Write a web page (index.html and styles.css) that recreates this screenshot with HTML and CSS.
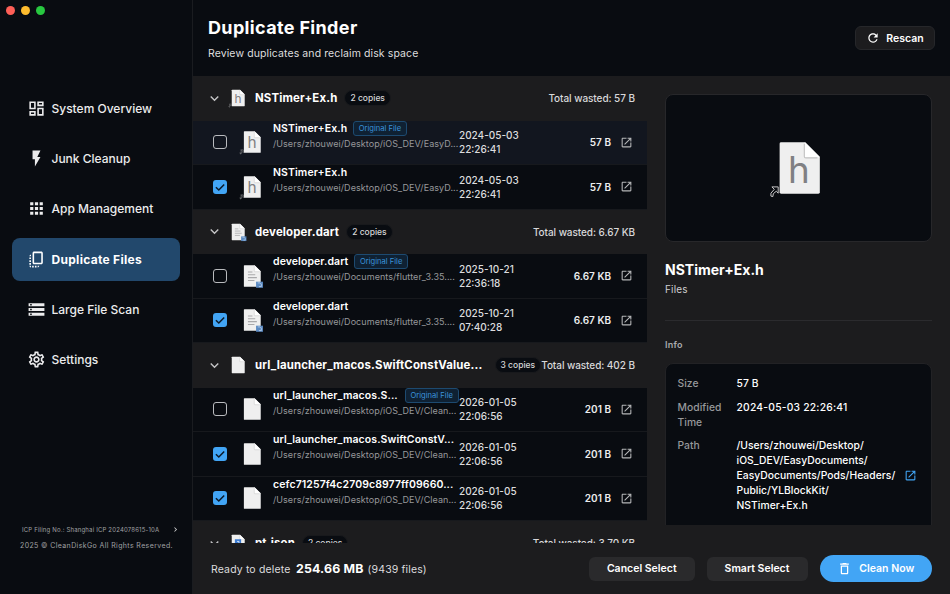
FILE: index.html
```
<!DOCTYPE html>
<html lang="en">
<head>
  <meta charset="UTF-8">
  <meta name="viewport" content="width=device-width, initial-scale=1.0">
  <title>CleanDiskGo</title>
  <link rel="stylesheet" href="styles.css">
</head>
<body>
  <svg class="sprite">
    <symbol id="dashboard" viewBox="0 0 24 24"><path d="M19 5v2h-4V5h4M9 5v6H5V5h4m10 8v6h-4v-6h4M9 17v2H5v-2h4M21 3h-8v6h8V3zM11 3H3v10h8V3zm10 8h-8v10h8V11zm-10 4H3v6h8v-6z"/></symbol>
    <symbol id="bolt" viewBox="0 0 24 24"><path d="M7 2v11h3v9l7-12h-4l4-8z"/></symbol>
    <symbol id="apps" viewBox="0 0 24 24"><path d="M4 8h4V4H4v4zm6 12h4v-4h-4v4zm-6 0h4v-4H4v4zm0-6h4v-4H4v4zm6 0h4v-4h-4v4zm6-10v4h4V4h-4zm-6 4h4V4h-4v4zm6 6h4v-4h-4v4zm0 6h4v-4h-4v4z"/></symbol>
    <symbol id="copy" viewBox="0 0 24 24"><path d="M18,2H9C7.9,2,7,2.9,7,4v12c0,1.1,0.9,2,2,2h9c1.1,0,2-0.9,2-2V4C20,2.9,19.1,2,18,2z M18,16H9V4h9V16z M3,15v-2h2v2H3z M3,9.5h2v2H3V9.5z M10,20h2v2h-2V20z M3,18.5v-2h2v2H3z M5,22c-1.1,0-2-0.9-2-2h2V22z M8.5,22h-2v-2h2V22z M13.5,22L13.5,22l0-2h2v0C15.5,21.1,14.6,22,13.5,22z M5,6L5,6l0,2H3v0C3,6.9,3.9,6,5,6z"/></symbol>
    <symbol id="storage" viewBox="0 0 24 24"><path d="M2 20h20v-4H2v4zm2-3h2v2H4v-2zM2 4v4h20V4H2zm4 3H4V5h2v2zm-4 7h20v-4H2v4zm2-3h2v2H4v-2z"/></symbol>
    <symbol id="settings" viewBox="0 0 24 24"><path d="M19.43 12.98c.04-.32.07-.64.07-.98s-.03-.66-.07-.98l2.11-1.65c.19-.15.24-.42.12-.64l-2-3.46c-.09-.16-.26-.25-.44-.25-.06 0-.12.01-.17.03l-2.49 1c-.52-.4-1.08-.73-1.69-.98l-.38-2.65C14.46 2.18 14.25 2 14 2h-4c-.25 0-.46.18-.49.42l-.38 2.65c-.61.25-1.17.59-1.69.98l-2.49-1c-.06-.02-.12-.03-.18-.03-.17 0-.34.09-.43.25l-2 3.46c-.13.22-.07.49.12.64l2.11 1.65c-.04.32-.07.65-.07.98s.03.66.07.98l-2.11 1.65c-.19.15-.24.42-.12.64l2 3.46c.09.16.26.25.44.25.06 0 .12-.01.17-.03l2.49-1c.52.4 1.08.73 1.69.98l.38 2.65c.03.24.24.42.49.42h4c.25 0 .46-.18.49-.42l.38-2.65c.61-.25 1.17-.59 1.69-.98l2.49 1c.06.02.12.03.18.03.17 0 .34-.09.43-.25l2-3.46c.12-.22.07-.49-.12-.64l-2.11-1.65zm-1.98-1.71c.04.31.05.52.05.73 0 .21-.02.43-.05.73l-.14 1.13.89.7 1.08.84-.7 1.21-1.27-.51-1.04-.42-.9.68c-.43.32-.84.56-1.25.73l-1.06.43-.16 1.13-.2 1.35h-1.4l-.19-1.35-.16-1.13-1.06-.43c-.43-.18-.83-.41-1.23-.71l-.91-.7-1.06.43-1.27.51-.7-1.21 1.08-.84.89-.7-.14-1.13c-.03-.31-.05-.54-.05-.74s.02-.43.05-.73l.14-1.13-.89-.7-1.08-.84.7-1.21 1.27.51 1.04.42.9-.68c.43-.32.84-.56 1.25-.73l1.06-.43.16-1.13.2-1.35h1.39l.19 1.35.16 1.13 1.06.43c.43.18.83.41 1.23.71l.91.7 1.06-.43 1.27-.51.7 1.21-1.07.85-.89.7.14 1.13zM12 8c-2.21 0-4 1.79-4 4s1.79 4 4 4 4-1.79 4-4-1.79-4-4-4zm0 6c-1.1 0-2-.9-2-2s.9-2 2-2 2 .9 2 2-.9 2-2 2z"/></symbol>
    <symbol id="refresh" viewBox="0 0 24 24"><path d="M17.65 6.35C16.2 4.9 14.21 4 12 4c-4.42 0-7.99 3.58-7.99 8s3.57 8 7.99 8c3.73 0 6.84-2.55 7.73-6h-2.08c-.82 2.33-3.04 4-5.65 4-3.31 0-6-2.69-6-6s2.69-6 6-6c1.66 0 3.14.69 4.22 1.78L13 11h7V4l-2.35 2.35z"/></symbol>
    <symbol id="trash" viewBox="0 0 24 24"><path d="M16 9v10H8V9h8m-1.5-6h-5l-1 1H5v2h14V4h-3.5l-1-1zM18 7H6v12c0 1.1.9 2 2 2h8c1.1 0 2-.9 2-2V7z"/></symbol>
    <symbol id="down" viewBox="0 0 24 24"><path d="M16.59 8.59L12 13.17 7.41 8.59 6 10l6 6 6-6z"/></symbol>
    <symbol id="right" viewBox="0 0 24 24"><path d="M10 6L8.59 7.41 13.17 12l-4.58 4.59L10 18l6-6z"/></symbol>
    <symbol id="open" viewBox="0 0 24 24"><path d="M19 19H5V5h7V3H5c-1.11 0-2 .9-2 2v14c0 1.1.89 2 2 2h14c1.1 0 2-.9 2-2v-7h-2v7zM14 3v2h3.59l-9.83 9.83 1.41 1.41L19 6.41V10h2V3h-7z"/></symbol>
    <symbol id="check" viewBox="0 0 14 14"><path d="M2.9 7.2l2.9 2.8 5.4-5.6" fill="none" stroke="#0b1a29" stroke-width="1.5"/></symbol>
    <symbol id="page" viewBox="0 0 64 64">
      <path d="M13.500 5.500H38.500L53.500 20.500V57a1.500 1.500 0 0 1-1.500 1.500H13.500a1.500 1.500 0 0 1-1.500-1.500V7a1.500 1.500 0 0 1 1.500-1.500z" fill="#efefef"/>
      <path d="M38 5.500L53.500 21H39.500a1.500 1.500 0 0 1-1.500-1.500z" fill="#fff"/>
      <path d="M37.500 7V20a1.500 1.500 0 0 0 1.500 1.500H51" fill="none" stroke="#c4c4c4" stroke-width="1.200"/>
    </symbol>
    <symbol id="header-file" viewBox="0 0 64 64">
      <use href="#page"/>
      <text x="32" y="47.500" text-anchor="middle" font-family="Inter" font-size="38" fill="#808083">h</text>
      <path d="M4 51.500h6.500v6.500l-2-2-3 2.500-.5 3-2-.5v-3l3.500-4z" fill="#090c11" stroke="#ccc" stroke-width="1"/>
    </symbol>
    <symbol id="dart-file" viewBox="0 0 64 64">
      <use href="#page"/>
      <path d="M22 22h11M22 29h18M22 36h22M22 43h16" stroke="#a9a9ab" stroke-width="2.500"/>
      <path d="M42 46h17v15H42z" fill="#5b8ac2"/>
      <path d="M46 49h6l3 3v6h-6" fill="none" stroke="#bcd3ee" stroke-width="2"/>
    </symbol>
    <symbol id="json-file" viewBox="0 0 64 64">
      <use href="#page"/>
      <path d="M22 20h20v24H22z" fill="#3d7bd0"/>
      <path d="M29 27h6v10" fill="none" stroke="#d5e5fa" stroke-width="3"/>
    </symbol>
  </svg>

  <div class="window">
    <aside class="sidebar">
      <div class="lights"><i class="red"></i><i class="yellow"></i><i class="green"></i></div>
      <nav>
        <a class="nav-item"><svg><use href="#dashboard"/></svg>System Overview</a>
        <a class="nav-item"><svg><use href="#bolt"/></svg>Junk Cleanup</a>
        <a class="nav-item"><svg><use href="#apps"/></svg>App Management</a>
        <a class="nav-item active"><svg><use href="#copy"/></svg>Duplicate Files</a>
        <a class="nav-item"><svg><use href="#storage"/></svg>Large File Scan</a>
        <a class="nav-item"><svg><use href="#settings"/></svg>Settings</a>
      </nav>
      <div class="legal">
        <p class="icp"><span>ICP Filing No.: Shanghai ICP 2024078615-10A</span><svg><use href="#right"/></svg></p>
        <p class="copyright">2025 © CleanDiskGo All Rights Reserved.</p>
      </div>
    </aside>

    <main>
      <header class="top">
        <div>
          <h1>Duplicate Finder</h1>
          <p class="subtitle">Review duplicates and reclaim disk space</p>
        </div>
        <button class="rescan-btn"><svg><use href="#refresh"/></svg>Rescan</button>
      </header>

      <div class="content">
        <section class="list">
          <div class="group">
            <svg class="arrow"><use href="#down"/></svg>
            <svg class="group-icon"><use href="#header-file"/></svg>
            <b class="group-name">NSTimer+Ex.h</b><span class="copies">2 copies</span>
            <span class="wasted">Total wasted: 57 B</span>
          </div>
          <div class="row selected">
            <span class="checkbox"></span>
            <svg class="file-icon"><use href="#header-file"/></svg>
            <div class="info">
              <div class="name"><b>NSTimer+Ex.h</b><span class="tag">Original File</span></div>
              <div class="path">/Users/zhouwei/Desktop/iOS_DEV/EasyD...</div>
            </div>
            <div class="date">2024-05-03 22:26:41</div>
            <div class="size">57 B</div>
            <svg class="open"><use href="#open"/></svg>
          </div>
          <div class="row">
            <span class="checkbox checked"><svg><use href="#check"/></svg></span>
            <svg class="file-icon"><use href="#header-file"/></svg>
            <div class="info">
              <div class="name"><b>NSTimer+Ex.h</b></div>
              <div class="path">/Users/zhouwei/Desktop/iOS_DEV/EasyD...</div>
            </div>
            <div class="date">2024-05-03 22:26:41</div>
            <div class="size">57 B</div>
            <svg class="open"><use href="#open"/></svg>
          </div>

          <div class="group">
            <svg class="arrow"><use href="#down"/></svg>
            <svg class="group-icon"><use href="#dart-file"/></svg>
            <b class="group-name">developer.dart</b><span class="copies">2 copies</span>
            <span class="wasted">Total wasted: 6.67 KB</span>
          </div>
          <div class="row">
            <span class="checkbox"></span>
            <svg class="file-icon"><use href="#dart-file"/></svg>
            <div class="info">
              <div class="name"><b>developer.dart</b><span class="tag">Original File</span></div>
              <div class="path">/Users/zhouwei/Documents/flutter_3.35....</div>
            </div>
            <div class="date">2025-10-21 22:36:18</div>
            <div class="size">6.67 KB</div>
            <svg class="open"><use href="#open"/></svg>
          </div>
          <div class="row">
            <span class="checkbox checked"><svg><use href="#check"/></svg></span>
            <svg class="file-icon"><use href="#dart-file"/></svg>
            <div class="info">
              <div class="name"><b>developer.dart</b></div>
              <div class="path">/Users/zhouwei/Documents/flutter_3.35....</div>
            </div>
            <div class="date">2025-10-21 07:40:28</div>
            <div class="size">6.67 KB</div>
            <svg class="open"><use href="#open"/></svg>
          </div>

          <div class="group">
            <svg class="arrow"><use href="#down"/></svg>
            <svg class="group-icon"><use href="#page"/></svg>
            <b class="group-name long">url_launcher_macos.SwiftConstValue...</b><span class="copies">3 copies</span>
            <span class="wasted">Total wasted: 402 B</span>
          </div>
          <div class="row">
            <span class="checkbox"></span>
            <svg class="file-icon"><use href="#page"/></svg>
            <div class="info">
              <div class="name"><b class="cut">url_launcher_macos.S...</b><span class="tag">Original File</span></div>
              <div class="path">/Users/zhouwei/Desktop/iOS_DEV/Clean...</div>
            </div>
            <div class="date">2026-01-05 22:06:56</div>
            <div class="size">201 B</div>
            <svg class="open"><use href="#open"/></svg>
          </div>
          <div class="row">
            <span class="checkbox checked"><svg><use href="#check"/></svg></span>
            <svg class="file-icon"><use href="#page"/></svg>
            <div class="info">
              <div class="name"><b>url_launcher_macos.SwiftConstV...</b></div>
              <div class="path">/Users/zhouwei/Desktop/iOS_DEV/Clean...</div>
            </div>
            <div class="date">2026-01-05 22:06:56</div>
            <div class="size">201 B</div>
            <svg class="open"><use href="#open"/></svg>
          </div>
          <div class="row">
            <span class="checkbox checked"><svg><use href="#check"/></svg></span>
            <svg class="file-icon"><use href="#page"/></svg>
            <div class="info">
              <div class="name"><b>cefc71257f4c2709c8977ff09660...</b></div>
              <div class="path">/Users/zhouwei/Desktop/iOS_DEV/Clean...</div>
            </div>
            <div class="date">2026-01-05 22:06:56</div>
            <div class="size">201 B</div>
            <svg class="open"><use href="#open"/></svg>
          </div>

          <div class="group">
            <svg class="arrow"><use href="#down"/></svg>
            <svg class="group-icon"><use href="#json-file"/></svg>
            <b class="group-name">pt.json</b><span class="copies">2 copies</span>
            <span class="wasted">Total wasted: 3.70 KB</span>
          </div>
        </section>

        <section class="detail">
          <div class="preview"><svg><use href="#header-file"/></svg></div>
          <h2>NSTimer+Ex.h</h2>
          <p class="kind">Files</p>
          <hr>
          <h3>Info</h3>
          <div class="card">
            <span class="label">Size</span>
            <span>57 B</span>
            <span class="label">Modified<br>Time</span>
            <span class="modified">2024-05-03 22:26:41</span>
            <span class="label">Path</span>
            <div class="full-path">
              <span>/Users/zhouwei/Desktop/<br>iOS_DEV/EasyDocuments/<br>EasyDocuments/Pods/Headers/<br>Public/YLBlockKit/<br>NSTimer+Ex.h</span>
              <svg><use href="#open"/></svg>
            </div>
          </div>
        </section>
      </div>

      <footer class="bottom">
        <p>Ready to delete <b>254.66 MB</b> (9439 files)</p>
        <button class="btn cancel">Cancel Select</button>
        <button class="btn smart">Smart Select</button>
        <button class="clean-btn"><svg><use href="#trash"/></svg>Clean Now</button>
      </footer>
    </main>
  </div>
</body>
</html>
```
FILE: styles.css
```
*{
  box-sizing: border-box;
}
body{
  margin: 0;
  background-color: #090c11;
  color: white;
  font-family: Inter, "Liberation Sans", sans-serif;
  font-size: 10.5px;
}
h1, h2, h3, p{
  margin: 0;
}
svg{
  fill: currentColor;
  flex: none;
  display: block;
}
button{
  border: none;
  color: white;
  font-family: inherit;
  font-weight: 600;
  cursor: pointer;
  padding: 0;
  display: flex;
  align-items: center;
  justify-content: center;
}
.sprite{
  display: none;
}
.window{
  display: flex;
  width: 950px;
  height: 594px;
  overflow: hidden;
}

/* sidebar */
.sidebar{
  width: 193px;
  flex: none;
  border-right: 1px solid #1a1c20;
  display: flex;
  flex-direction: column;
}
.lights{
  display: flex;
  gap: 6px;
  padding: 6px 0 0 6px;
}
.lights i{
  width: 9px;
  height: 9px;
  border-radius: 50%;
}
.red{ background-color: #fe5f57; }
.yellow{ background-color: #febc2e; }
.green{ background-color: #28c840; }
nav{
  padding: 71.5px 12px 0;
  display: flex;
  flex-direction: column;
  gap: 7.4px;
}
.nav-item{
  display: flex;
  align-items: center;
  gap: 5.5px;
  height: 43px;
  padding-left: 15px;
  border-radius: 8px;
  font-size: 12px;
  font-weight: 500;
  color: #ececed;
}
.nav-item svg{
  width: 19px;
  height: 19px;
}
.nav-item.active{
  background-color: #22486c;
  color: white;
  font-weight: 700;
  letter-spacing: 0.3px;
}
.legal{
  margin-top: auto;
  padding: 0 0 42px 20px;
  color: #a0a1a4;
}
.icp{
  display: flex;
  align-items: center;
  font-size: 6px;
  padding-left: 2px;
  letter-spacing: 0.18px;
}
.icp svg{
  width: 9px;
  height: 9px;
  margin-left: 12px;
  color: #ddd;
}
.copyright{
  font-size: 7px;
  line-height: 12px;
  margin-top: 6px;
  letter-spacing: 0.38px;
}

/* header */
main{
  flex: 1;
  display: flex;
  flex-direction: column;
}
.top{
  height: 76px;
  flex: none;
  display: flex;
  align-items: center;
  justify-content: space-between;
  padding: 0 15px;
}
.top h1{
  font-size: 18px;
  line-height: 24px;
  margin-top: 2px;
  letter-spacing: 0.35px;
}
.subtitle{
  font-size: 10.5px;
  line-height: 16px;
  margin-top: 6px;
  letter-spacing: 0.1px;
  color: #dededf;
}
.rescan-btn{
  width: 80px;
  height: 24px;
  gap: 6px;
  border-radius: 6px;
  background-color: #1c1c1e;
  border: 1px solid #26272a;
  font-size: 10.5px;
}
.rescan-btn svg{
  width: 14px;
  height: 14px;
}

/* duplicate list */
.content{
  height: 467px;
  flex: none;
  display: flex;
  background-color: #1c1c1e;
  overflow: hidden;
}
.list{
  width: 454px;
  flex: none;
}
.group{
  height: 44.5px;
  display: flex;
  align-items: center;
  padding: 0 12px 0 12.5px;
}
.arrow{
  width: 17px;
  height: 17px;
  color: #c4c4c6;
}
.group-icon{
  width: 20px;
  height: 20px;
  margin: 0 7.5px 0 5px;
}
.group-name{
  font-size: 11.4px;
  letter-spacing: 0.17px;
}
.group-name.long{
  width: 232.5px;
  flex: none;
}
.copies{
  height: 16px;
  line-height: 15px;
  margin-left: 7px;
  padding: 0 5px;
  border-radius: 8px;
  border: 1px solid #18191c;
  background-color: #090c11;
  font-size: 8.5px;
  font-weight: 500;
  color: #d5d5d6;
  white-space: nowrap;
}
.wasted{
  margin-left: auto;
  font-weight: 500;
  font-size: 10px;
  letter-spacing: -0.06px;
  color: #d8d8da;
  white-space: nowrap;
}
.row{
  height: 44.5px;
  display: flex;
  align-items: center;
  padding: 0 14.5px 0 20px;
  background-color: #090c11;
  border-bottom: 1px solid #17191d;
}
.row.selected{
  background-color: #12161f;
}
.checkbox{
  width: 14px;
  height: 14px;
  flex: none;
  border: 1.5px solid #b9bbbe;
  border-radius: 3px;
}
.checkbox.checked{
  background-color: #42a5f5;
  border: none;
}
.checkbox svg{
  width: 14px;
  height: 14px;
}
.file-icon{
  width: 26px;
  height: 26px;
  margin: 0 8px 0 12px;
}
.info{
  width: 186px;
  flex: none;
  align-self: flex-start;
}
.name{
  display: flex;
  align-items: center;
  height: 15px;
  font-size: 10.5px;
  letter-spacing: 0.09px;
  white-space: nowrap;
}
.name b{
  font-weight: 600;
  flex: none;
}
.name .cut{
  width: 126px;
}
.tag{
  margin-left: 5.5px;
  height: 15px;
  line-height: 13px;
  padding: 0 5px;
  border: 1px solid #1d4a70;
  border-radius: 3px;
  background-color: #0f2133;
  color: #3b93da;
  font-size: 7.6px;
  letter-spacing: 0;
}
.path{
  font-size: 9px;
  line-height: 15px;
  letter-spacing: 0.06px;
  color: #97989b;
  white-space: nowrap;
}
.date{
  width: 65px;
  line-height: 14px;
  font-size: 10px;
  font-weight: 500;
  color: #dcdcde;
}
.size{
  margin-left: auto;
  font-size: 10px;
  font-weight: 600;
  color: #ececed;
}
.open{
  width: 13px;
  height: 13px;
  margin-left: 8.5px;
  color: #b5b6b8;
}

/* detail */
.detail{
  flex: 1;
  padding: 18px 18px 0;
  height: 449px;
  overflow: hidden;
}
.preview{
  height: 148px;
  border: 1px solid #27272a;
  border-radius: 8px;
  background-color: #090c11;
  display: flex;
  align-items: center;
  justify-content: center;
}
.preview svg{
  width: 62px;
  height: 62px;
}
.detail h2{
  font-size: 14px;
  line-height: 20px;
  margin-top: 18px;
}
.kind{
  font-size: 10px;
  line-height: 14px;
  margin-top: 2px;
  letter-spacing: 0.15px;
  color: #cfcfd1;
}
.detail hr{
  border: none;
  height: 1px;
  margin: 24px 0 0;
  background-color: #2b2b2e;
}
.detail h3{
  font-size: 9px;
  font-weight: 600;
  line-height: 14px;
  letter-spacing: 0.2px;
  margin-top: 17px;
  color: #a9aaad;
}
.card{
  display: grid;
  grid-template-columns: 47px 1fr;
  gap: 9px 12px;
  margin-top: 11px;
  padding: 12px 11.5px;
  height: 200px;
  align-content: start;
  border: 1px solid #222225;
  border-radius: 8px;
  background-color: #090c11;
  font-size: 10.3px;
  font-weight: 500;
  line-height: 14.8px;
  letter-spacing: 0.05px;
}
.label{
  color: #97989b;
}
.modified{
  letter-spacing: 0.22px;
}
.full-path{
  display: flex;
  align-items: center;
  justify-content: space-between;
}
.full-path svg{
  width: 13px;
  height: 13px;
  margin-right: 2.5px;
  color: #42a5f5;
}

/* footer */
.bottom{
  flex: 1;
  display: flex;
  align-items: center;
  padding: 0 18px;
  background-color: #1c1c1e;
}
.bottom p{
  margin-right: auto;
  letter-spacing: 0.14px;
  color: #dcdcde;
}
.bottom b{
  font-size: 12.4px;
  color: white;
  margin: 0 1px 0 2.5px;
}
.btn{
  height: 24px;
  border-radius: 6px;
  background-color: #2a2a2c;
  font-size: 10.5px;
  margin-right: 12px;
}
.cancel{
  width: 105.5px;
}
.smart{
  width: 101px;
}
.clean-btn{
  width: 112.5px;
  height: 27px;
  gap: 7px;
  border-radius: 14px;
  background-color: #42a5f5;
  font-size: 10.5px;
}
.clean-btn svg{
  width: 15px;
  height: 15px;
}
```
